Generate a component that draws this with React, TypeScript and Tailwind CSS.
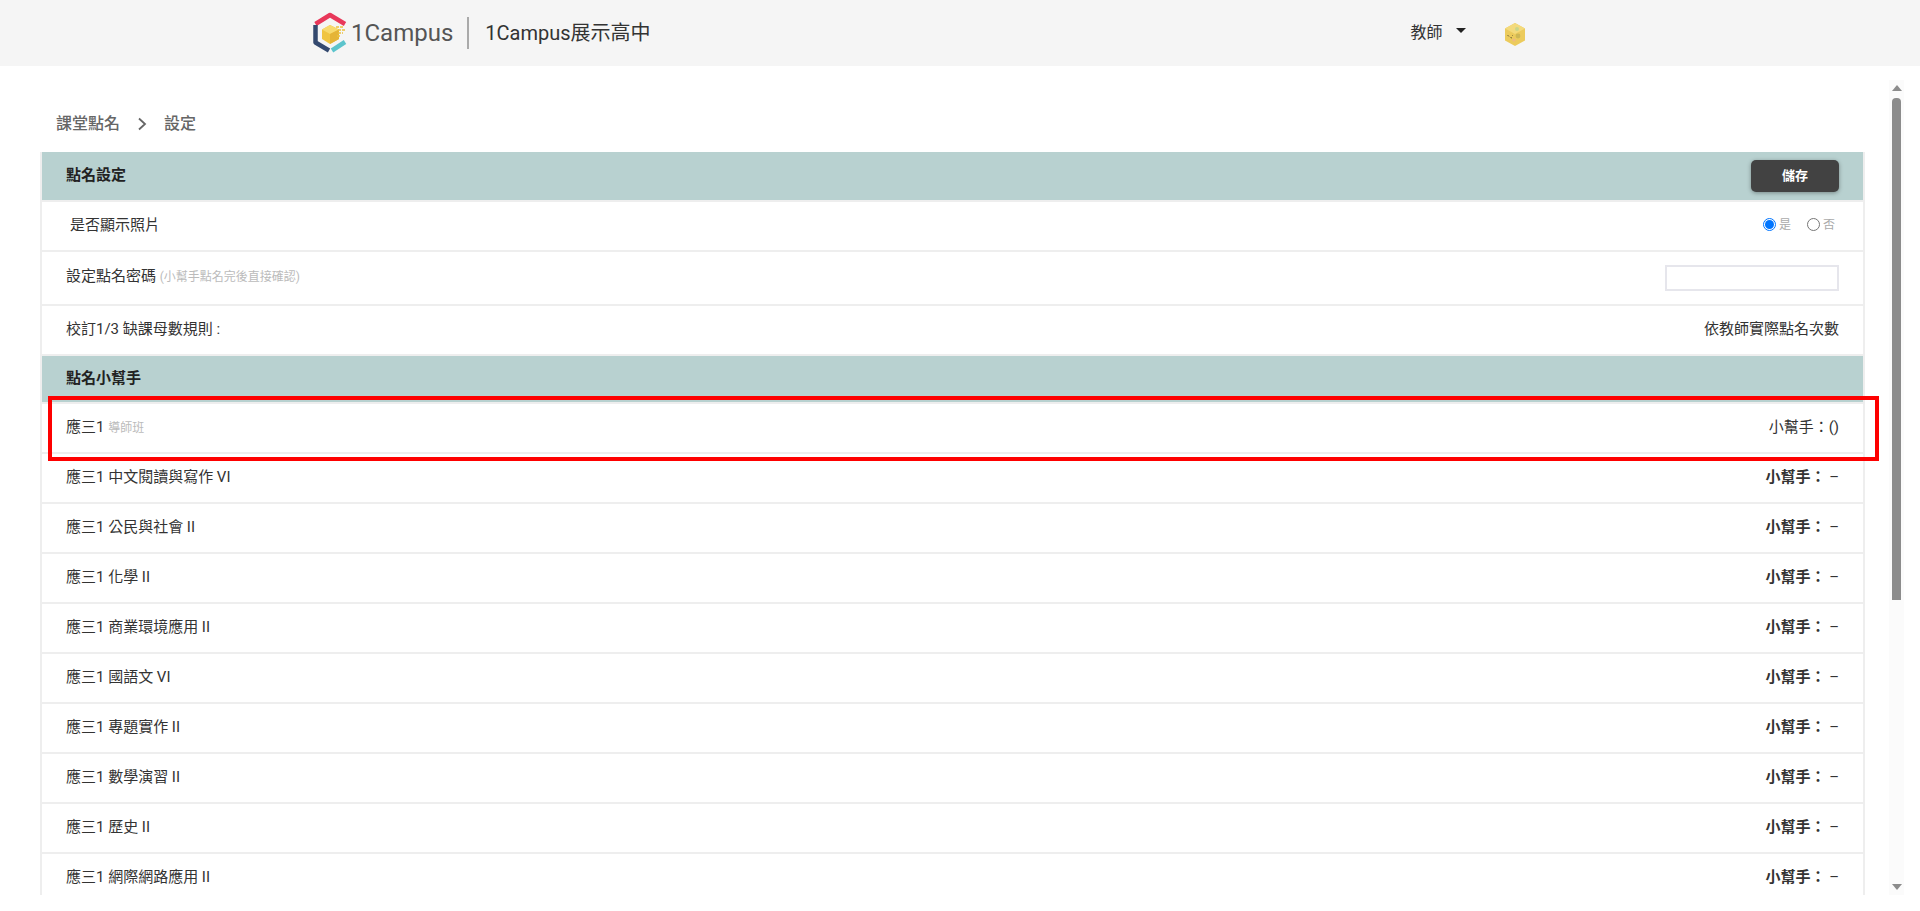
import React from 'react';

const courses = [
  '應三1 中文閱讀與寫作 VI',
  '應三1 公民與社會 II',
  '應三1 化學 II',
  '應三1 商業環境應用 II',
  '應三1 國語文 VI',
  '應三1 專題實作 II',
  '應三1 數學演習 II',
  '應三1 歷史 II',
  '應三1 網際網路應用 II',
];

const Logo = () => (
  <svg width="36" height="42" viewBox="0 0 36 42" className="shrink-0">
    <path d="M2.5 12 L17 3 L32 12" fill="none" stroke="#e8385a" strokeWidth="4.5" strokeLinejoin="round" />
    <path d="M2.5 13 V30.5 L16 38.5" fill="none" stroke="#34496f" strokeWidth="4.5" strokeLinejoin="round" />
    <path d="M19 38.5 L32 30" fill="none" stroke="#5cc4cc" strokeWidth="4.5" />
    <path d="M17 13 L26 17.5 V27 L17 32 L9 27 V17.5 Z" fill="#f0c542" />
    <path d="M17 13 L26 17.5 L17 22 L9 17.5 Z" fill="#f7da6e" />
    <path d="M17 22 L26 17.5 V27 L17 32 Z" fill="#e5b436" />
    <path d="M23 15 H31 M25 18 H33 M25 21 H30 M24 24 H28" stroke="#ecc13f" strokeWidth="1.4" strokeDasharray="3 1" />
  </svg>
);

const Avatar = () => (
  <svg width="22" height="25" viewBox="0 0 22 25" className="shrink-0">
    <path d="M11 1 L21 6.5 V18.5 L11 24 L1 18.5 V6.5 Z" fill="#eccb5c" />
    <path d="M11 1 L21 6.5 L11 12 L1 6.5 Z" fill="#f3da7c" />
    <circle cx="13" cy="7" r="2" fill="#c9d58a" />
    <circle cx="14" cy="14" r="2.4" fill="#cdb755" />
    <circle cx="10" cy="18" r="1.6" fill="#eeb884" />
    <path d="M3.5 13 L5 14.5 M6.5 15.5 L8 16 M8 13 L8.6 13.6" stroke="#6d6136" strokeWidth="1" />
  </svg>
);

const SectionHeader = ({ title, children, height }: { title: string; children?: React.ReactNode; height: string }) => (
  <div className={`flex items-center justify-between bg-[#b8d1d0] border-b-2 border-[#eeeeee] px-6 ${height}`}>
    <span className="pb-[2px] text-[15px] font-bold text-[#222]">{title}</span>
    {children}
  </div>
);

const Row = ({ children, height = 'h-[50px]' }: { children: React.ReactNode; height?: string }) => (
  <div className={`flex shrink-0 items-center justify-between border-b-2 border-[#eeeeee] px-6 pb-[2px] text-[15px] text-[#333] ${height}`}>
    {children}
  </div>
);

const Radio = ({ label, checked }: { label: string; checked?: boolean }) => (
  <span className="flex items-center gap-[3px]">
    {checked ? (
      <span className="mb-[2px] flex h-[13px] w-[13px] items-center justify-center rounded-full border border-[#0075ff]">
        <span className="h-[9px] w-[9px] rounded-full bg-[#0075ff]" />
      </span>
    ) : (
      <span className="mb-[2px] h-[13px] w-[13px] rounded-full border border-[#767676]" />
    )}
    <span className="text-[12px] text-[#aaa]">{label}</span>
  </span>
);

export default function App() {
  return (
    <div
      className="flex h-screen w-full flex-col overflow-hidden bg-white"
      style={{ fontFamily: 'Roboto, "Noto Sans CJK TC", sans-serif' }}
    >
      {/* Top bar */}
      <header className="flex h-[66px] shrink-0 items-center bg-[#f5f5f5] pl-[313px]">
        <Logo />
        <span className="ml-[2px] text-[24px] leading-none text-[#555]">1Campus</span>
        <div className="ml-[14px] h-[32px] w-[2px] bg-[#aaaaaa]" />
        <span className="ml-[16px] text-[20px] text-[#333]">1Campus展示高中</span>
        <span className="ml-[760px] text-[16px] text-[#333]">教師</span>
        <span className="ml-[13px] mb-[5px] h-0 w-0 border-x-[5px] border-t-[5px] border-x-transparent border-t-[#222]" />
        <div className="ml-[38px] mt-[2px]">
          <Avatar />
        </div>
      </header>

      <div className="flex h-[829px] shrink-0">
        {/* Page content */}
        <main className="flex min-w-0 flex-1 flex-col overflow-hidden pl-[40px] pr-[24px]">
          <nav className="flex h-[86px] shrink-0 items-center gap-[17px] pl-[16px] pt-[30px] text-[16px] font-medium text-[#666]">
            <span>課堂點名</span>
            <svg width="10" height="14" viewBox="0 0 10 14">
              <path d="M2 1.5 L8 7 L2 12.5" fill="none" stroke="#666" strokeWidth="1.8" />
            </svg>
            <span>設定</span>
          </nav>

          <section className="flex flex-1 flex-col border-x-2 border-[#eeeeee]">
            <SectionHeader title="點名設定" height="h-[50px] shrink-0">
              <button className="mb-[1px] h-[32px] w-[88px] rounded-[5px] bg-[#424242] text-[13px] font-bold text-white shadow-[0_1px_4px_rgba(0,0,0,0.35)]">
                儲存
              </button>
            </SectionHeader>
            <Row>
              <span className="pl-[4px]">是否顯示照片</span>
              <span className="flex items-center gap-[16px] pr-[4px]">
                <Radio label="是" checked />
                <Radio label="否" />
              </span>
            </Row>
            <Row height="h-[54px]">
              <span className="pb-[2px]">
                設定點名密碼 <span className="text-[12px] text-[#bbb]">(小幫手點名完後直接確認)</span>
              </span>
              <input className="mt-[2px] h-[26px] w-[174px] border-2 border-[#e6e6ec] bg-white outline-none" />
            </Row>
            <Row>
              <span>校訂1/3 缺課母數規則 :</span>
              <span>依教師實際點名次數</span>
            </Row>
            <SectionHeader title="點名小幫手" height="h-[48px] shrink-0" />
            <Row>
              <span>
                應三1 <span className="text-[12px] text-[#bbb]">導師班</span>
              </span>
              <span>小幫手：()</span>
            </Row>
            {courses.map((c) => (
              <Row key={c}>
                <span>{c}</span>
                <span>
                  <span className="font-bold">小幫手：</span> –
                </span>
              </Row>
            ))}
          </section>
        </main>

        {/* Scrollbar */}
        <div className="mr-[16px] mt-[14px] flex w-[15px] shrink-0 flex-col items-center bg-[#fbfbfb] pt-[5px]">
          <span className="h-0 w-0 border-x-[5px] border-b-[6px] border-x-transparent border-b-[#8c8c8c]" />
          <div className="mt-[7px] h-[502px] w-[9px] rounded-t-[4px] bg-[#8c8c8c]" />
          <div className="flex-1" />
          <span className="mb-[5px] h-0 w-0 border-x-[5px] border-t-[6px] border-x-transparent border-t-[#8c8c8c]" />
        </div>
      </div>

      {/* Red highlight around the homeroom row */}
      <div className="absolute left-[48px] top-[396px] h-[65px] w-[1831px] border-[4px] border-[#fe0000]" />
    </div>
  );
}
